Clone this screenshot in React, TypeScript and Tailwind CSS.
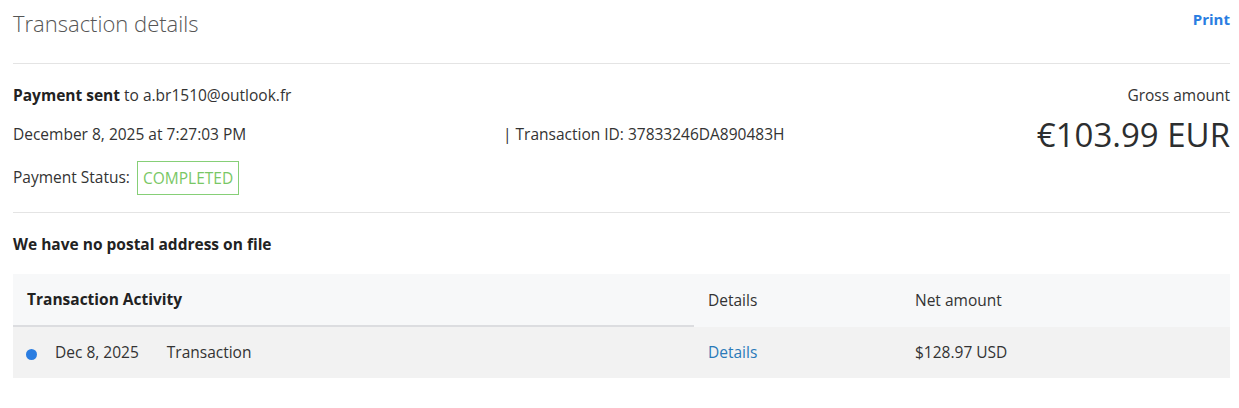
export default function App() {
  return (
    <div
      className="h-[408px] w-full bg-white pl-[13px] pr-[9px] text-[15.5px] text-[#333333]"
      style={{ fontFamily: '"Open Sans", "Noto Sans", sans-serif' }}
    >
      <div className="flex h-[64px] items-start justify-between border-b border-[#e4e4e4]">
        <h1 className="mt-[7px] text-[22px] font-light leading-[32px] text-[#555555]">Transaction details</h1>
        <button type="button" className="mt-[9px] text-[15px] font-bold leading-[20px] text-[#2a7de1]">
          Print
        </button>
      </div>

      <div className="grid h-[149px] grid-cols-[490px_1fr_auto] grid-rows-[46px_32px_54px] border-b border-[#e4e4e4] pt-[9px]">
        <p className="self-center">
          <span className="font-bold text-[#222222]">Payment sent</span> to a.br1510@outlook.fr
        </p>
        <span />
        <p className="self-center justify-self-end">Gross amount</p>

        <p className="self-center">December 8, 2025 at 7:27:03 PM</p>
        <p className="self-center">| Transaction ID: 37833246DA890483H</p>
        <p className="self-center justify-self-end text-[33px] leading-[40px] text-[#2c2e2f]">€103.99 EUR</p>

        <div className="col-span-3 flex items-center gap-[7px] self-center">
          <span>Payment Status:</span>
          <span className="border border-[#86cf77] px-[5px] py-[4px] leading-[24px] text-[#79c765]">COMPLETED</span>
        </div>
      </div>

      <p className="mt-[20px] font-bold leading-[22px] text-[#222222]">We have no postal address on file</p>

      <div className="mt-[19px]">
        <div className="flex h-[53px] bg-[#f7f8f9]">
          <div className="flex w-[681px] items-center border-b-2 border-[#dcdde0] pl-[14px] font-bold text-[#222222]">
            Transaction Activity
          </div>
          <div className="flex w-[207px] items-center pl-[14px]">Details</div>
          <div className="flex flex-1 items-center pl-[14px]">Net amount</div>
        </div>
        <div className="flex h-[51px] items-center bg-[#f2f2f2]">
          <div className="flex w-[681px] items-center">
            <span className="ml-[13px] mt-[3px] h-[11px] w-[11px] rounded-full bg-[#2a7de1]" />
            <span className="ml-[18px]">Dec 8, 2025</span>
            <span className="ml-[28px]">Transaction</span>
          </div>
          <a className="w-[207px] pl-[14px] text-[#2a7ab9]" href="#">
            Details
          </a>
          <span className="pl-[14px]">$128.97 USD</span>
        </div>
      </div>
    </div>
  );
}
